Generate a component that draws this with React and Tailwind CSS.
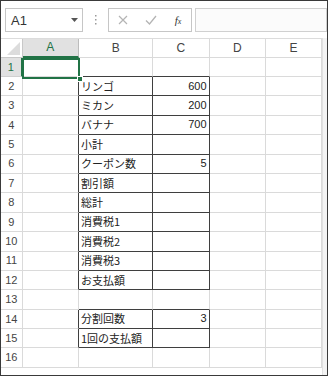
import React from "react";

const rows = [
  { n: 1 },
  { n: 2, b: "リンゴ", c: "600", box: true },
  { n: 3, b: "ミカン", c: "200", box: true },
  { n: 4, b: "バナナ", c: "700", box: true },
  { n: 5, b: "小計", c: "", box: true },
  { n: 6, b: "クーポン数", c: "5", box: true },
  { n: 7, b: "割引額", c: "", box: true },
  { n: 8, b: "総計", c: "", box: true },
  { n: 9, b: "消費税1", c: "", box: true },
  { n: 10, b: "消費税2", c: "", box: true },
  { n: 11, b: "消費税3", c: "", box: true },
  { n: 12, b: "お支払額", c: "", box: true },
  { n: 13 },
  { n: 14, b: "分割回数", c: "3", box: true },
  { n: 15, b: "1回の支払額", c: "", box: true },
  { n: 16 },
];

const boxedAbove = (i) => rows[i + 1] && rows[i + 1].box;

export default function App() {
  return (
    <div
      className="w-[328px] h-[376px] border border-[#3a3a3a] bg-white flex flex-col overflow-hidden relative"
      style={{ fontFamily: '"Liberation Sans", "Noto Sans CJK JP", sans-serif' }}
    >
      {/* Toolbar */}
      <div className="h-[37px] shrink-0 flex items-start pt-[7px] pl-[4px] bg-white">
        <div className="w-[78px] h-[24px] border border-[#c6c6c6] bg-white flex items-center justify-between pl-[5px] pr-[4px]">
          <span className="text-[13px] text-[#333] leading-none">A1</span>
          <svg width="7" height="4" viewBox="0 0 7 4">
            <path d="M0 0h7L3.5 4z" fill="#555" />
          </svg>
        </div>
        <div className="w-[25px] h-[24px] flex items-center justify-center">
          <svg width="3" height="10" viewBox="0 0 3 10">
            <rect x="1" y="0" width="1.5" height="1.5" fill="#9a9a9a" />
            <rect x="1" y="4" width="1.5" height="1.5" fill="#9a9a9a" />
            <rect x="1" y="8" width="1.5" height="1.5" fill="#9a9a9a" />
          </svg>
        </div>
        <div className="w-[84px] h-[24px] border border-[#c6c6c6] bg-white flex items-center">
          <div className="w-[28px] flex justify-center">
            <svg width="10" height="10" viewBox="0 0 10 10">
              <path d="M1 1l8 8M9 1l-8 8" stroke="#b4b4b4" strokeWidth="1.2" />
            </svg>
          </div>
          <div className="w-[28px] flex justify-center">
            <svg width="12" height="10" viewBox="0 0 12 10">
              <path d="M1 5.5l3.5 3.5L11 1" stroke="#b4b4b4" strokeWidth="1.3" fill="none" />
            </svg>
          </div>
          <div className="w-[26px] flex justify-center">
            <span
              className="text-[11px] italic text-[#333] leading-none"
              style={{ fontFamily: '"Liberation Serif", serif' }}
            >
              f<span className="text-[8px]">x</span>
            </span>
          </div>
        </div>
        <div className="ml-[3px] flex-1 h-[24px] border border-[#d0d0d0] bg-[#fbfbfb]" />
      </div>

      {/* Grid */}
      <div className="flex flex-1">
        <div className="flex flex-col">
          {/* header row */}
          <div className="flex h-[19.6px] border-t border-[#dcdcdc]">
            <div className="w-[21.7px] h-full relative border-r border-b border-[#c8c8c8] bg-white">
              <svg className="absolute right-[2px] bottom-[2px]" width="13" height="13" viewBox="0 0 13 13">
                <path d="M13 0V13H0z" fill="#dcdcdc" />
              </svg>
            </div>
            <div className="w-[56.3px] h-full flex items-center justify-center bg-[#e1e1e1] border-r border-[#bcbcbc] border-b-2 border-b-[#217346] text-[12px] text-[#217346]">
              A
            </div>
            {[
              ["B", "w-[74.3px]"],
              ["C", "w-[56.3px]"],
              ["D", "w-[56.3px]"],
              ["E", "w-[56.3px]"],
            ].map(([l, w]) => (
              <div
                key={l}
                className={`${w} h-full flex items-center justify-center bg-white border-r border-b border-[#dadada] text-[12px] text-[#444]`}
              >
                {l}
              </div>
            ))}
          </div>
          {rows.map((r, i) => {
            const above = boxedAbove(i);
            return (
              <div key={r.n} className="flex h-[19.4px]">
                <div
                  className={
                    r.n === 1
                      ? "w-[21.7px] h-full flex items-center justify-center bg-[#e1e1e1] border-r-2 border-r-[#217346] border-b border-b-[#d0d0d0] text-[11px] text-[#217346]"
                      : "w-[21.7px] h-full flex items-center justify-center bg-white border-r border-b border-[#dadada] text-[11px] text-[#444]"
                  }
                >
                  {r.n}
                </div>
                <div
                  className={`w-[56.3px] h-full border-b border-b-[#dadada] border-r ${
                    r.box ? "border-r-[#3f3f3f]" : "border-r-[#dadada]"
                  }`}
                />
                <div
                  className={`w-[74.3px] h-full flex items-center pl-[2px] text-[11px] text-[#222] border-r border-b ${
                    r.box ? "border-r-[#3f3f3f]" : "border-r-[#dadada]"
                  } ${r.box || above ? "border-b-[#3f3f3f]" : "border-b-[#dadada]"}`}
                  style={{ fontFamily: '"Noto Sans CJK JP", sans-serif' }}
                >
                  <span className="leading-none">{r.b}</span>
                </div>
                <div
                  className={`w-[56.3px] h-full flex items-center justify-end pr-[2px] text-[11px] text-[#222] border-r border-b ${
                    r.box ? "border-r-[#3f3f3f]" : "border-r-[#dadada]"
                  } ${r.box || above ? "border-b-[#3f3f3f]" : "border-b-[#dadada]"}`}
                >
                  <span className="leading-none">{r.c}</span>
                </div>
                <div className="w-[56.3px] h-full border-r border-b border-[#dadada]" />
                <div className="w-[56.3px] h-full border-r border-b border-[#dadada]" />
              </div>
            );
          })}
        </div>
        <div className="flex-1 bg-[#f3f3f3] border-l border-[#e0e0e0]" />
      </div>

      {/* Selection overlay for A1 */}
      <div className="absolute left-[21px] top-[56.6px] w-[58.3px] h-[21.4px] border-2 border-[#217346] pointer-events-none" />
      <div className="absolute left-[76px] top-[75px] w-[6px] h-[6px] bg-[#217346] border border-white" />
    </div>
  );
}
